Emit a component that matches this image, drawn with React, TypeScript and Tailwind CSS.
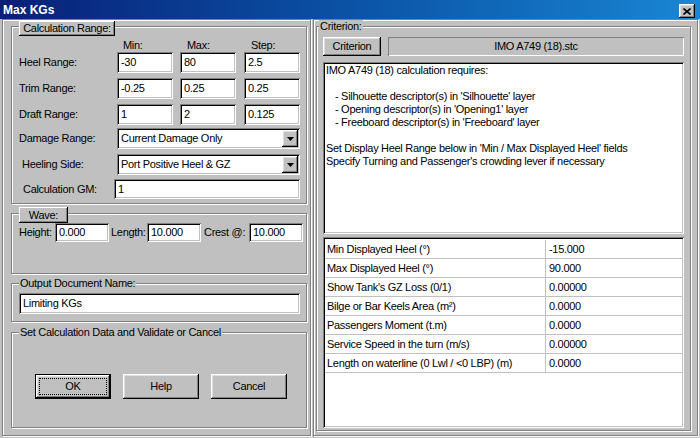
import clsx from "clsx";
import { ReactNode } from "react";

// classic win32 bevels, drawn as stacked inset shadows
const sunken =
	"bg-white shadow-[inset_1px_1px_0_#808080,inset_-1px_-1px_0_#fff,inset_2px_2px_0_#000,inset_-2px_-2px_0_#c0c0c0]";
const raised =
	"bg-[#c0c0c0] shadow-[inset_-1px_-1px_0_#000,inset_1px_1px_0_#fff,inset_-2px_-2px_0_#808080,inset_2px_2px_0_#dfdfdf]";
const etched = "border border-[#808080] shadow-[inset_1px_1px_0_#fff,1px_1px_0_#fff]";

const Field = ({ value, className }: { value: string; className?: string }) => (
	<div className={clsx(sunken, "flex shrink-0 items-center pl-[4px] whitespace-nowrap", className)}>
		{value}
	</div>
);

const Select = ({ value, className }: { value: string; className?: string }) => (
	<div className={clsx(sunken, "flex shrink-0 items-center justify-between pr-[2px] pl-[4px]", className)}>
		<span>{value}</span>
		<div className={clsx(raised, "flex h-[17px] w-[16px] items-center justify-center")}>
			<svg width="7" height="4" viewBox="0 0 7 4">
				<path d="M0 0h7L3.5 4z" fill="#000" />
			</svg>
		</div>
	</div>
);

const Button = ({ label, className }: { label: string; className?: string }) => (
	<div className={clsx(raised, "flex items-center justify-center", className)}>{label}</div>
);

// groupbox whose caption is either plain text or a small push button on the top edge
const GroupBox = ({
	caption,
	captionClass,
	plain,
	className,
	children,
}: {
	caption: string;
	captionClass: string;
	plain?: boolean;
	className?: string;
	children?: ReactNode;
}) => (
	<div className={clsx(etched, "relative", className)}>
		{plain ? (
			<span className={clsx("absolute bg-[#c0c0c0] px-px leading-[13px]", captionClass)}>{caption}</span>
		) : (
			<div
				className={clsx(
					"absolute flex items-center justify-center bg-[#c0c0c0] shadow-[inset_-1px_-1px_0_#000,inset_1px_1px_0_#fff,inset_-2px_-2px_0_#808080]",
					captionClass,
				)}
			>
				{caption}
			</div>
		)}
		{children}
	</div>
);

const rangeRows = [
	{ label: "Heel Range:", values: ["-30", "80", "2.5"] },
	{ label: "Trim Range:", values: ["-0.25", "0.25", "0.25"] },
	{ label: "Draft Range:", values: ["1", "2", "0.125"] },
];

const criterionRows = [
	["Min Displayed Heel (°)", "-15.000"],
	["Max Displayed Heel (°)", "90.000"],
	["Show Tank's GZ Loss (0/1)", "0.00000"],
	["Bilge or Bar Keels Area (m²)", "0.0000"],
	["Passengers Moment (t.m)", "0.0000"],
	["Service Speed in the turn (m/s)", "0.00000"],
	["Length on waterline (0 Lwl / <0 LBP) (m)", "0.0000"],
];

export default function App() {
	return (
		<div className="flex h-[438px] w-[700px] flex-col overflow-hidden bg-[#c0c0c0] font-['Liberation_Sans',Arial,sans-serif] text-[11px] tracking-[-0.3px] text-black">
			{/* title bar */}
			<div className="flex h-[19px] shrink-0 items-center justify-between bg-gradient-to-r from-[#0a1e78] to-[#1a86d4] pl-[3px]">
				<span className="text-[12px] font-bold tracking-normal text-white">Max KGs</span>
				<div className={clsx(raised, "mt-[3px] mr-[5px] flex h-[14px] w-[16px] items-center justify-center")}>
					<svg width="8" height="7" viewBox="0 0 8 7">
						<path d="M0.5 0.5 7.5 6.5M7.5 0.5 0.5 6.5" stroke="#000" strokeWidth="1.6" />
					</svg>
				</div>
			</div>

			<div className="flex">
				{/* left pane */}
				<div className={clsx(etched, "ml-[2px] flex h-[417px] w-[309px] flex-col pl-[8px]")}>
					<GroupBox
						caption="Calculation Range:"
						captionClass="top-[-6px] left-[7px] h-[15px] w-[96px]"
						className="mt-[6px] h-[178px] w-[296px] pt-[12px] pl-[7px]"
					>
						<div className="flex h-[13px] items-center leading-[13px]">
							<span className="w-[98px]" />
							<span className="w-[63px] pl-[6px]">Min:</span>
							<span className="w-[64px] pl-[7px]">Max:</span>
							<span className="pl-[7px]">Step:</span>
						</div>
						<div className="flex flex-col gap-[5px]">
							{rangeRows.map((row) => (
								<div key={row.label} className="flex h-[21px] items-center">
									<span className="w-[98px]">{row.label}</span>
									<div className="flex gap-[7px]">
										{row.values.map((v, i) => (
											<Field key={i} value={v} className={clsx("h-[21px] w-[56px]", i === 2 && "ml-px")} />
										))}
									</div>
								</div>
							))}
						</div>
						<div className="mt-[3px] flex h-[21px] items-center">
							<span className="w-[98px]">Damage Range:</span>
							<Select value="Current Damage Only" className="h-[21px] w-[183px]" />
						</div>
						<div className="mt-[5px] flex h-[21px] items-center">
							<span className="w-[98px] pl-[3px]">Heeling Side:</span>
							<Select value="Port Positive Heel & GZ" className="h-[21px] w-[183px]" />
						</div>
						<div className="mt-[4px] flex h-[20px] items-center">
							<span className="w-[95px] pl-[4px]">Calculation GM:</span>
							<Field value="1" className="h-[20px] w-[186px]" />
						</div>
					</GroupBox>

					<GroupBox
						caption="Wave:"
						captionClass="top-[-7px] left-[7px] h-[16px] w-[49px]"
						className="mt-[9px] h-[61px] w-[296px] pt-[9px] pl-[7px]"
					>
						<div className="flex h-[19px] items-center">
							<span className="w-[36px]">Height:</span>
							<Field value="0.000" className="h-[19px] w-[54px]" />
							<span className="ml-[2px] w-[36px]">Length:</span>
							<Field value="10.000" className="h-[19px] w-[54px]" />
							<span className="ml-[3px] w-[45px]">Crest @:</span>
							<Field value="10.000" className="h-[19px] w-[54px]" />
						</div>
					</GroupBox>

					<GroupBox
						plain
						caption="Output Document Name:"
						captionClass="top-[-7px] left-[7px]"
						className="mt-[9px] h-[39px] w-[296px] pt-[9px] pl-[7px]"
					>
						<Field value="Limiting KGs" className="h-[21px] w-[281px]" />
					</GroupBox>

					<GroupBox
						plain
						caption="Set Calculation Data and Validate or Cancel"
						captionClass="top-[-7px] left-[7px]"
						className="mt-[10px] h-[96px] w-[296px] pt-[41px] pl-[23px]"
					>
						<div className="flex gap-[12px]">
							<div className="h-[25px] w-[76px] border border-black">
								<div className={clsx(raised, "h-full w-full p-[3px]")}>
									<div className="flex h-full w-full items-center justify-center border border-dotted border-black">
										OK
									</div>
								</div>
							</div>
							<Button label="Help" className="h-[25px] w-[76px]" />
							<Button label="Cancel" className="h-[25px] w-[76px]" />
						</div>
					</GroupBox>
				</div>

				{/* right pane */}
				<div className={clsx(etched, "ml-[2px] h-[417px] w-[385px] pl-[2px]")}>
					<GroupBox
						plain
						caption="Criterion:"
						captionClass="top-[-7px] left-[2px]"
						className="mt-[6px] flex h-[405px] w-[375px] flex-col px-[6px] pt-[10px]"
					>
						<div className="flex h-[19px] gap-[7px]">
							<Button label="Criterion" className="h-[19px] w-[58px]" />
							<div className="flex flex-1 items-center justify-center shadow-[inset_1px_1px_0_#808080,inset_-1px_-1px_0_#fff]">
								IMO A749 (18).stc
							</div>
						</div>

						<div className={clsx(sunken, "mt-[6px] h-[172px] px-[3px] pt-[2px] leading-[13px]")}>
							<p>IMO A749 (18) calculation requires:</p>
							<p className="mt-[13px] pl-[9px]">- Silhouette descriptor(s) in 'Silhouette' layer</p>
							<p className="pl-[9px]">- Opening descriptor(s) in 'Opening1' layer</p>
							<p className="pl-[9px]">- Freeboard descriptor(s) in 'Freeboard' layer</p>
							<p className="mt-[13px]">Set Display Heel Range below in 'Min / Max Displayed Heel' fields</p>
							<p>Specify Turning and Passenger's crowding lever if necessary</p>
						</div>

						<div className={clsx(sunken, "mt-[3px] h-[191px] p-[2px] pt-[3px]")}>
							{criterionRows.map(([name, value]) => (
								<div key={name} className="flex h-[19px] border-b border-[#c0c0c0]">
									<span className="flex w-[221px] items-center border-r border-[#c0c0c0] pl-[2px]">{name}</span>
									<span className="flex items-center pl-[3px]">{value}</span>
								</div>
							))}
						</div>
					</GroupBox>
				</div>
			</div>
		</div>
	);
}
